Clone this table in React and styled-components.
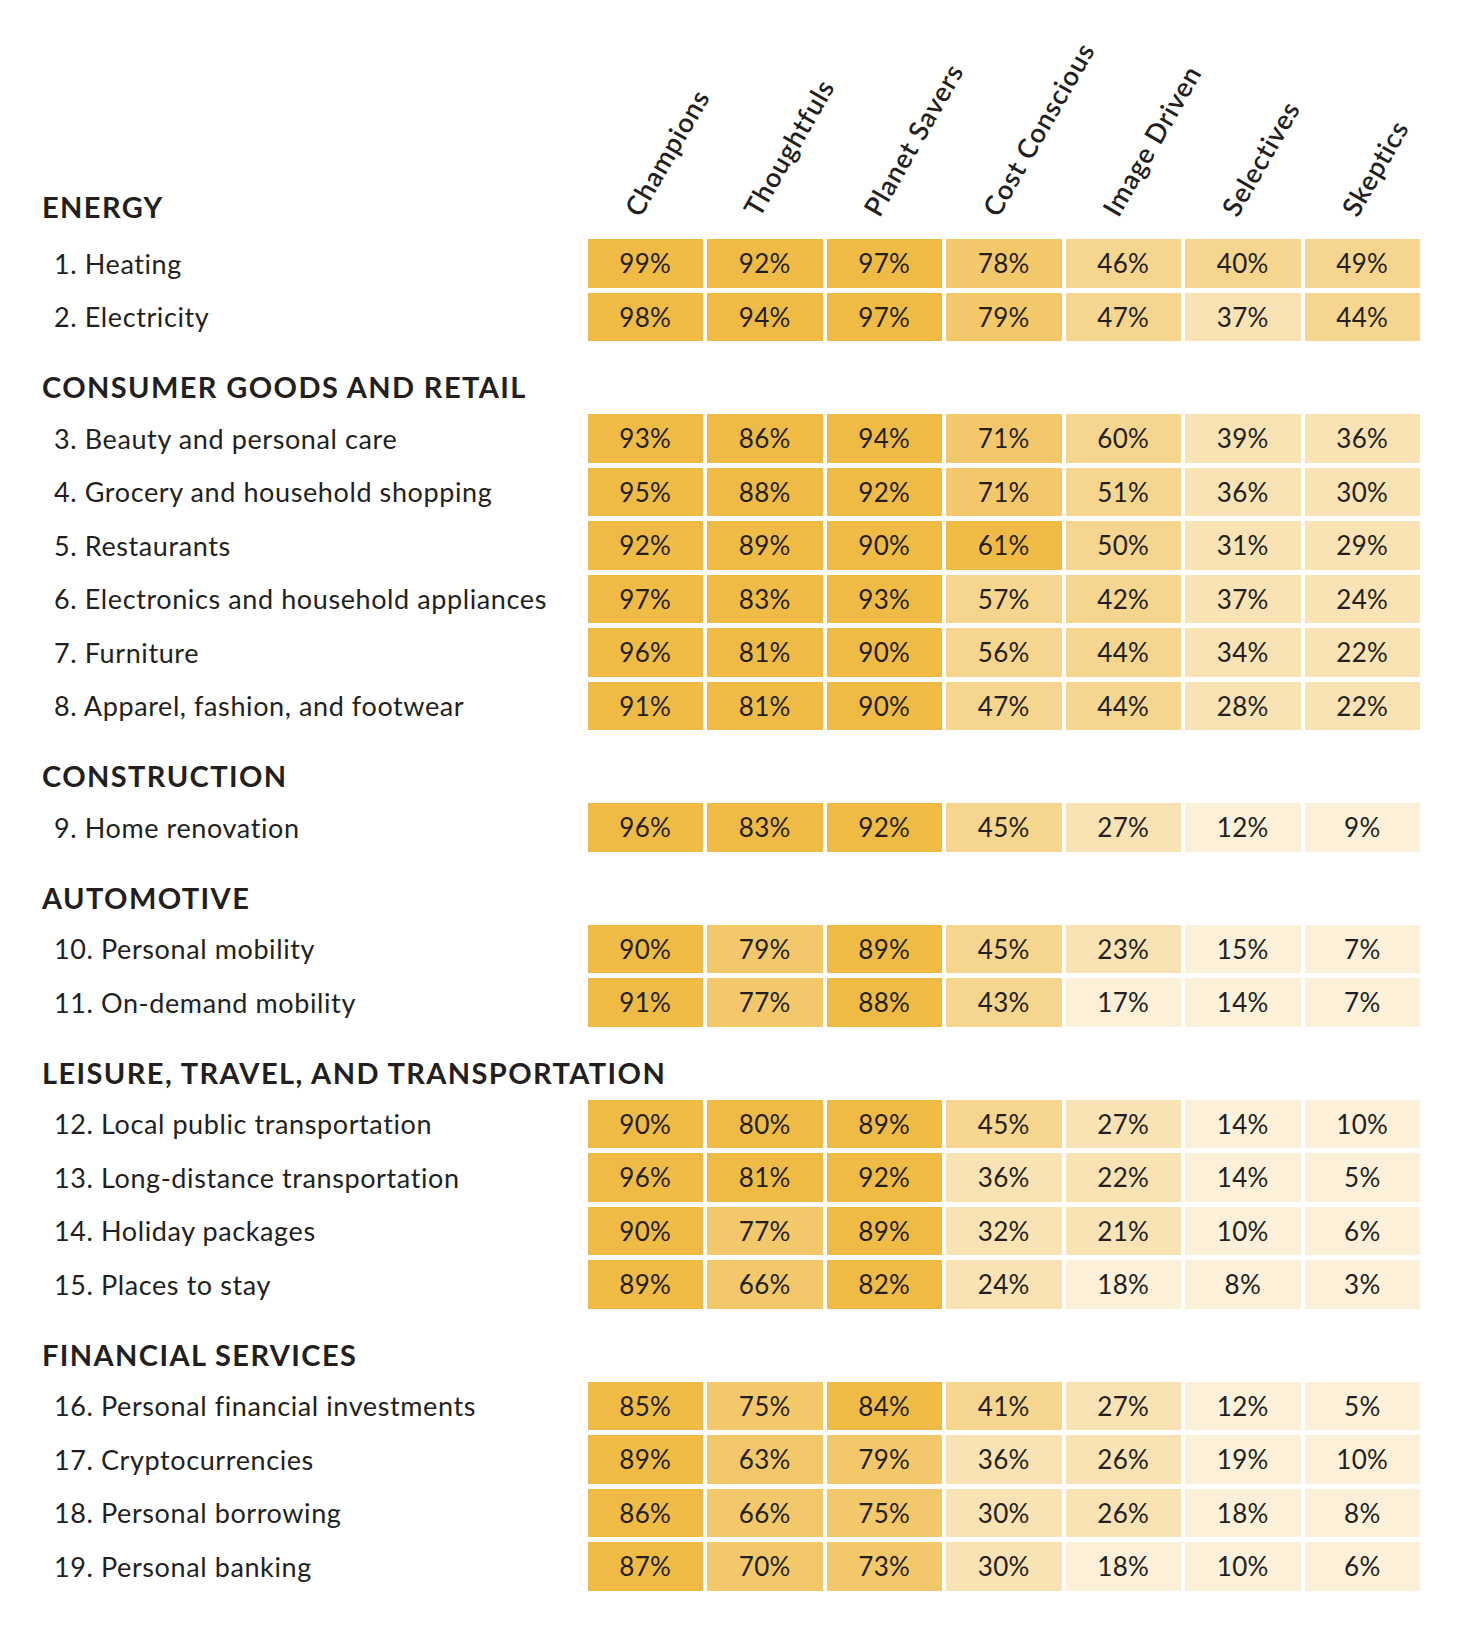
import styled, { createGlobalStyle } from "styled-components";

const GlobalStyle = createGlobalStyle`
  body {
    margin: 0;
    background: #ffffff;
  }
`;

const columns = [
  "Champions",
  "Thoughtfuls",
  "Planet Savers",
  "Cost Conscious",
  "Image Driven",
  "Selectives",
  "Skeptics",
];

// shades: optional per-column override of the colour step
const sections = [
  {
    title: "ENERGY",
    rows: [
      { label: "1. Heating", values: [99, 92, 97, 78, 46, 40, 49] },
      { label: "2. Electricity", values: [98, 94, 97, 79, 47, 37, 44] },
    ],
  },
  {
    title: "CONSUMER GOODS AND RETAIL",
    rows: [
      { label: "3. Beauty and personal care", values: [93, 86, 94, 71, 60, 39, 36], shades: { 4: 3 } },
      { label: "4. Grocery and household shopping", values: [95, 88, 92, 71, 51, 36, 30] },
      { label: "5. Restaurants", values: [92, 89, 90, 61, 50, 31, 29], shades: { 3: 1 } },
      { label: "6. Electronics and household appliances", values: [97, 83, 93, 57, 42, 37, 24] },
      { label: "7. Furniture", values: [96, 81, 90, 56, 44, 34, 22] },
      { label: "8. Apparel, fashion, and footwear", values: [91, 81, 90, 47, 44, 28, 22] },
    ],
  },
  {
    title: "CONSTRUCTION",
    rows: [{ label: "9. Home renovation", values: [96, 83, 92, 45, 27, 12, 9] }],
  },
  {
    title: "AUTOMOTIVE",
    rows: [
      { label: "10. Personal mobility", values: [90, 79, 89, 45, 23, 15, 7] },
      { label: "11. On-demand mobility", values: [91, 77, 88, 43, 17, 14, 7] },
    ],
  },
  {
    title: "LEISURE, TRAVEL, AND TRANSPORTATION",
    rows: [
      { label: "12. Local public transportation", values: [90, 80, 89, 45, 27, 14, 10] },
      { label: "13. Long-distance transportation", values: [96, 81, 92, 36, 22, 14, 5] },
      { label: "14. Holiday packages", values: [90, 77, 89, 32, 21, 10, 6] },
      { label: "15. Places to stay", values: [89, 66, 82, 24, 18, 8, 3] },
    ],
  },
  {
    title: "FINANCIAL SERVICES",
    rows: [
      { label: "16. Personal financial investments", values: [85, 75, 84, 41, 27, 12, 5] },
      { label: "17. Cryptocurrencies", values: [89, 63, 79, 36, 26, 19, 10] },
      { label: "18. Personal borrowing", values: [86, 66, 75, 30, 26, 18, 8] },
      { label: "19. Personal banking", values: [87, 70, 73, 30, 18, 10, 6] },
    ],
  },
];

const palette = {
  1: "#f0bb45",
  2: "#f3c86a",
  3: "#f6d58e",
  4: "#f9e2b3",
  5: "#fcf0d8",
};

const shadeFor = (v) => {
  if (v >= 80) return 1;
  if (v >= 60) return 2;
  if (v >= 40) return 3;
  if (v >= 20) return 4;
  return 5;
};

const Page = styled.div`
  width: 1468px;
  min-height: 1636px;
  box-sizing: border-box;
  padding-left: 42px;
  background: #ffffff;
  color: #231f20;
  font-family: Lato, "Open Sans", sans-serif;
`;

const Grid = styled.div`
  display: grid;
  grid-template-columns: 541.5px repeat(7, 115.5px);
  column-gap: 4px;
`;

const HeaderRow = styled(Grid)`
  height: 239px;
  align-items: end;
`;

const HeaderCell = styled.div`
  display: flex;
  align-items: flex-end;
  height: 100%;
  padding-bottom: 19px;
  box-sizing: border-box;
`;

const ColumnLabel = styled.span`
  display: block;
  margin-left: 55px;
  white-space: nowrap;
  font-size: 27px;
  font-weight: 600;
  letter-spacing: 0.8px;
  line-height: 1;
  transform: rotate(-60deg);
  transform-origin: 0 100%;
`;

const SectionTitle = styled.h2`
  margin: 0;
  font-size: 29px;
  font-weight: 700;
  letter-spacing: 1.4px;
  line-height: 1;
  white-space: nowrap;
`;

const FirstTitleCell = styled.div`
  padding-bottom: 18px;
`;

const Section = styled.section`
  display: flex;
  flex-direction: column;
  gap: 5px;
`;

const TitleBar = styled.div`
  height: 73px;
  display: flex;
  align-items: flex-end;
  padding-bottom: 13px;
  box-sizing: border-box;
  margin-bottom: -5px;
`;

const DataRow = styled(Grid)`
  height: 48.5px;
`;

const RowLabel = styled.div`
  display: flex;
  align-items: center;
  padding-left: 12px;
  font-size: 27px;
  letter-spacing: 0.6px;
  white-space: nowrap;
`;

const Cell = styled.div`
  display: flex;
  align-items: center;
  justify-content: center;
  background: ${(p) => palette[p.$shade]};
  font-size: 26px;
  letter-spacing: 0.3px;
`;

const App = () => {
  return (
    <Page>
      <GlobalStyle />
      <HeaderRow>
        <FirstTitleCell>
          <SectionTitle>{sections[0].title}</SectionTitle>
        </FirstTitleCell>
        {columns.map((c) => (
          <HeaderCell key={c}>
            <ColumnLabel>{c}</ColumnLabel>
          </HeaderCell>
        ))}
      </HeaderRow>
      {sections.map((s, si) => (
        <Section key={s.title}>
          {si > 0 && (
            <TitleBar>
              <SectionTitle>{s.title}</SectionTitle>
            </TitleBar>
          )}
          {s.rows.map((r) => (
            <DataRow key={r.label}>
              <RowLabel>{r.label}</RowLabel>
              {r.values.map((v, i) => (
                <Cell key={i} $shade={r.shades?.[i] ?? shadeFor(v)}>
                  {v}%
                </Cell>
              ))}
            </DataRow>
          ))}
        </Section>
      ))}
    </Page>
  );
};

export default App;
